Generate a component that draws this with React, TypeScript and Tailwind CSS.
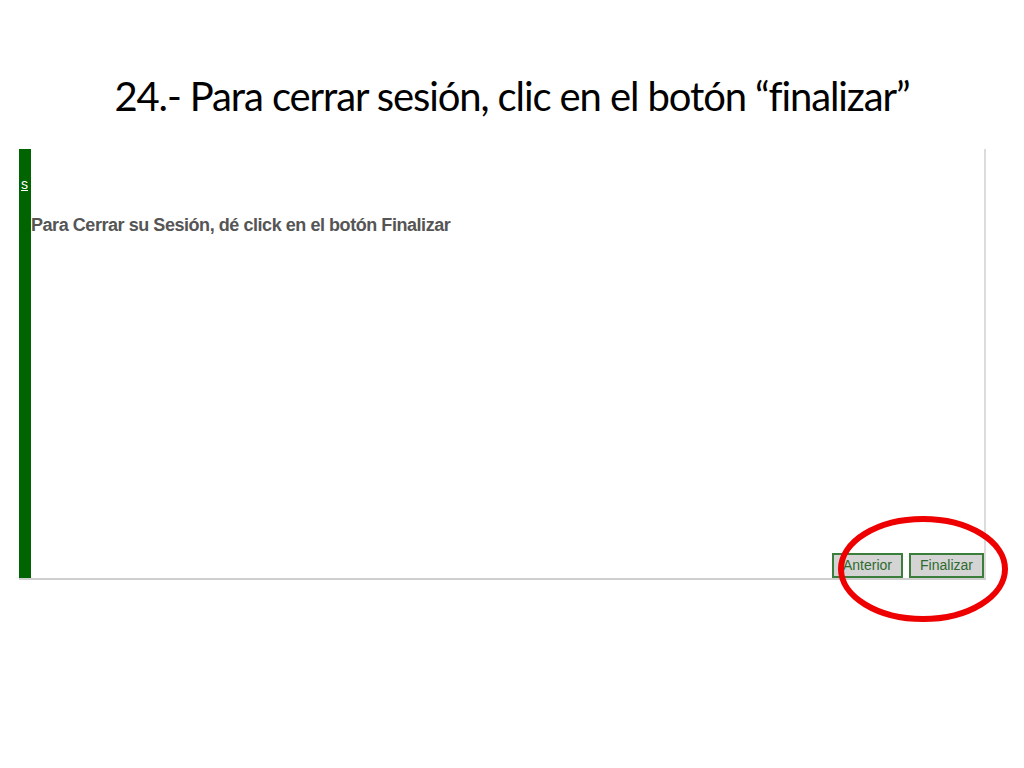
import React from "react";

export default function App() {
  return (
    <div className="relative w-[1024px] h-[768px] overflow-hidden bg-white">
      <h1 className="pt-[76px] text-center font-['Lato','Open_Sans',sans-serif] text-[40px] leading-[40px] font-normal tracking-[-1.1px] text-black">
        24.- Para cerrar sesión, clic en el botón “finalizar”
      </h1>
      <div className="ml-[19px] mt-[33px] flex h-[431px] w-[967px] border-b-2 border-[#cfcfcf]">
        <div className="relative w-[12px] shrink-0 bg-[#006400]">
          <span className="absolute left-[2px] top-[27px] font-['Liberation_Sans',sans-serif] text-[14px] leading-[16px] text-white underline">
            s
          </span>
        </div>
        <div className="flex flex-1 flex-col border-r-2 border-[#dcdcdc]">
          <p className="pt-[66px] font-['Liberation_Sans',sans-serif] text-[18px] font-bold leading-[20px] tracking-[-0.45px] text-[#555555]">
            Para Cerrar su Sesión, dé click en el botón Finalizar
          </p>
          <div className="mt-auto flex justify-end gap-[6px]">
            <button className="flex h-[25px] w-[71px] items-center justify-center border-2 border-[#3b7d3b] bg-[#d4d4d4] font-['Liberation_Sans',sans-serif] text-[14px] text-[#2f6b2f]">
              Anterior
            </button>
            <button className="flex h-[25px] w-[75px] items-center justify-center border-2 border-[#3b7d3b] bg-[#d4d4d4] font-['Liberation_Sans',sans-serif] text-[14px] text-[#2f6b2f]">
              Finalizar
            </button>
          </div>
        </div>
      </div>
      <svg
        className="absolute left-[838px] top-[515px]"
        width="172"
        height="108"
        viewBox="0 0 172 108"
      >
        <ellipse cx="85" cy="54" rx="82" ry="50" fill="none" stroke="#ee0000" strokeWidth="6" />
      </svg>
    </div>
  );
}
